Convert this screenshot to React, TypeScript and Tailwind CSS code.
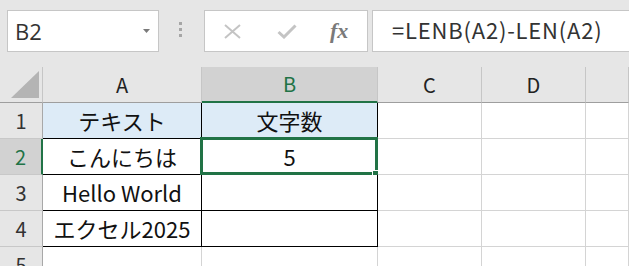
import React from "react";

const jp = "font-['Noto_Sans_CJK_JP',sans-serif]";

type CellProps = {
  children?: React.ReactNode;
  className?: string;
};

const Cell = ({ children, className = "" }: CellProps) => (
  <div
    className={`relative flex items-center justify-center h-[36px] border-r border-b ${className}`}
  >
    {children}
  </div>
);

const RowHead = ({ n, active }: { n: number; active?: boolean }) => (
  <div
    className={`flex items-center justify-center h-[36px] border-b border-b-[#c8c8c8] ${
      active
        ? "bg-[#d2d2d2] text-[#217346] border-r-2 border-r-[#217346]"
        : "bg-[#e6e6e6] text-[#333] border-r border-r-[#a8a8a8]"
    } text-[20px]`}
  >
    {n}
  </div>
);

const ColHead = ({ label, active }: { label: string; active?: boolean }) => (
  <div
    className={`flex items-center justify-center h-[36px] border-r border-r-[#c6c6c6] ${
      active
        ? "bg-[#d2d2d2] text-[#217346] border-b-2 border-b-[#217346]"
        : "bg-[#e6e6e6] text-[#222] border-b border-b-[#9e9e9e]"
    } text-[20px]`}
  >
    {label}
  </div>
);

const App = () => {
  const rows = [
    { n: 1, a: "テキスト", b: "文字数" },
    { n: 2, a: "こんにちは", b: "5" },
    { n: 3, a: "Hello World", b: "" },
    { n: 4, a: "エクセル2025", b: "" },
  ];

  return (
    <div className={`w-[629px] h-[266px] overflow-hidden bg-[#e6e6e6] ${jp}`}>
      {/* formula bar */}
      <div className="flex items-start h-[67px] pt-[10px] pl-[7px]">
        <div className="relative w-[152px] h-[42px] shrink-0 bg-white border border-[#c6c6c6] flex items-center pl-[7px]">
          <span className="font-['Open_Sans',sans-serif] text-[22px] text-[#333] leading-none">
            B2
          </span>
          <svg
            className="absolute left-[135px] top-[18px]"
            width="7"
            height="4"
            viewBox="0 0 7 4"
          >
            <path d="M0 0 L7 0 L3.5 4 Z" fill="#7a7a7a" />
          </svg>
        </div>

        <div className="w-[45px] shrink-0 flex flex-col gap-[3px] pl-[20px] pt-[12px]">
          <div className="w-[3px] h-[3px] bg-[#a6a6a6]" />
          <div className="w-[3px] h-[3px] bg-[#a6a6a6]" />
          <div className="w-[3px] h-[3px] bg-[#a6a6a6]" />
        </div>

        <div className="w-[164px] h-[42px] shrink-0 bg-white border border-[#c6c6c6] flex items-center">
          <svg className="ml-[18px]" width="19" height="15" viewBox="0 0 19 15">
            <path d="M2 1 L17 14 M17 1 L2 14" stroke="#c4c4c4" strokeWidth="2" />
          </svg>
          <svg className="ml-[35px]" width="20" height="15" viewBox="0 0 20 15">
            <path
              d="M1.5 8 L7 13 L18.5 1.5"
              stroke="#c4c4c4"
              strokeWidth="3"
              fill="none"
            />
          </svg>
          <span className="ml-[33px] font-['Liberation_Serif',serif] italic font-bold text-[22px] text-[#7a7a7a] leading-none">
            fx
          </span>
        </div>

        <div className="ml-[4px] w-[300px] h-[42px] shrink-0 bg-white border border-[#c6c6c6] flex items-center pl-[19px] pb-[4px]">
          <span className="text-[22px] tracking-[0.8px] text-[#333] leading-none">
            =LENB(A2)-LEN(A2)
          </span>
        </div>
      </div>

      {/* sheet grid */}
      <div className="grid grid-cols-[43px_159px_176px_104px_104px_1fr] text-[20px]">
        <div className="relative h-[36px] border-r border-r-[#c6c6c6] border-b border-b-[#9e9e9e]">
          <svg
            className="absolute left-[11px] top-[4px]"
            width="28"
            height="27"
            viewBox="0 0 28 27"
          >
            <path d="M28 0 L28 27 L0 27 Z" fill="#b4b4b4" />
          </svg>
        </div>
        <ColHead label="A" />
        <ColHead label="B" active />
        <ColHead label="C" />
        <ColHead label="D" />
        <ColHead label="" />

        {rows.map((r) => (
          <React.Fragment key={r.n}>
            <RowHead n={r.n} active={r.n === 2} />
            <Cell
              className={`border-black text-[#111] text-[22px] ${
                r.n === 1 ? "bg-[#ddebf7]" : "bg-white"
              }`}
            >
              {r.a}
            </Cell>
            <Cell
              className={`border-black text-[#111] text-[22px] ${
                r.n === 1 ? "bg-[#ddebf7]" : "bg-white"
              }`}
            >
              {r.b}
              {r.n === 2 && (
                <>
                  <div className="absolute -left-[2px] -top-[2px] -right-[1px] -bottom-[1px] border-[3px] border-[#217346]" />
                  <div className="absolute left-[170px] top-[31px] w-[9px] h-[9px] bg-[#217346] border border-white" />
                </>
              )}
            </Cell>
            <Cell className="bg-white border-[#d4d4d4]" />
            <Cell className="bg-white border-[#d4d4d4]" />
            <Cell className="bg-white border-[#d4d4d4]" />
          </React.Fragment>
        ))}

        <RowHead n={5} />
        <Cell className="bg-white border-[#d4d4d4]" />
        <Cell className="bg-white border-[#d4d4d4]" />
        <Cell className="bg-white border-[#d4d4d4]" />
        <Cell className="bg-white border-[#d4d4d4]" />
        <Cell className="bg-white border-[#d4d4d4]" />
      </div>
    </div>
  );
};

export default App;
